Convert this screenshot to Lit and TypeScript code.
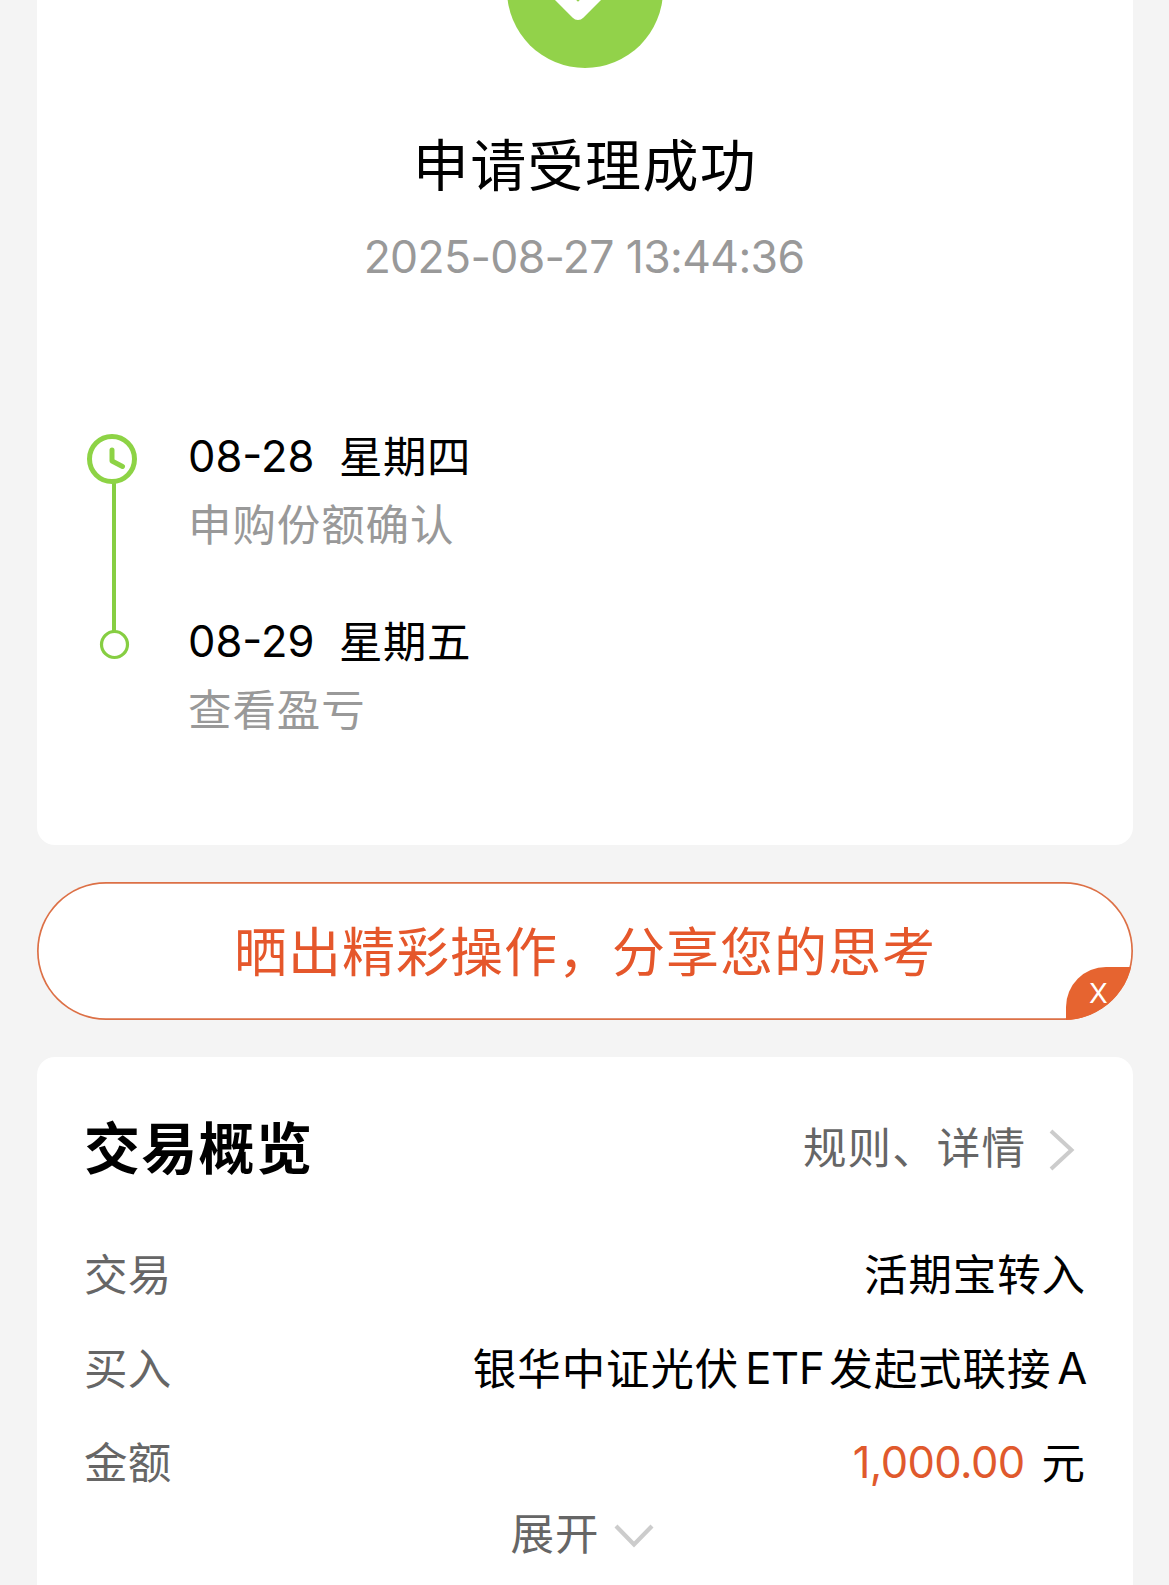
import { LitElement, html, css } from "lit";
import { customElement } from "lit/decorators.js";

@customElement("app-root")
export class AppRoot extends LitElement {
  static styles = css`
    :host {
      display: block;
      height: 1585px;
      overflow: hidden;
      background: #f4f4f4;
      color: #000;
      font-family: Inter, "Noto Sans CJK SC", sans-serif;
      font-size: 43.5px;
      line-height: 60px;
      letter-spacing: 0.9px;
    }
    * { box-sizing: border-box; }
    .page { display: flex; flex-direction: column; gap: 37px; padding: 0 36px 0 37px; }
    .card { background: #fff; border-radius: 18px; }
    .status {
      height: 845px;
      border-radius: 0 0 18px 18px;
      display: flex;
      flex-direction: column;
    }
    .badge { display: block; align-self: center; width: 156px; height: 68px; }
    .title {
      margin: 58px 0 0;
      text-align: center;
      font-size: 56px;
      font-weight: 400;
      line-height: 80px;
      letter-spacing: 1.4px;
    }
    .time { margin: 21px 2px 0 0; text-align: center; color: #999; font-size: 44.5px; letter-spacing: -0.65px; }
    .timeline { display: flex; margin-top: 138px; padding-left: 48px; }
    .rail { flex: none; display: block; width: 56px; height: 240px; }
    .steps { display: flex; flex-direction: column; gap: 57px; margin: 1px 0 0 47px; }
    .when { display: flex; height: 60px; }
    .day { width: 151px; letter-spacing: 0; }
    .week { padding-top: 1px; letter-spacing: 0.5px; }
    .note { margin-top: 9px; height: 59px; color: #999; }
    .share {
      position: relative;
      height: 138px;
      display: flex;
      align-items: center;
      justify-content: center;
      overflow: hidden;
      box-shadow: inset 0 0 0 1.7px #dc7046;
      border-radius: 69px;
      background: #fff;
      color: #e5572b;
      font-size: 53px;
      letter-spacing: 1px;
    }
    .slogan { padding-top: 3px; }
    .close {
      position: absolute;
      right: 0;
      bottom: 0;
      width: 67px;
      height: 53px;
      padding-right: 2px;
      border-radius: 40px 0 0 0;
      background: #e66430;
      color: #fff;
      font-size: 27.5px;
      line-height: 53px;
      letter-spacing: 0;
      text-align: center;
    }
    .overview { height: 600px; padding: 50px 48px 0; display: flex; flex-direction: column; }
    .head { display: flex; justify-content: space-between; align-items: center; height: 80px; }
    .head h2 { margin: 4px 0 0 -1px; font-size: 56px; font-weight: 700; letter-spacing: 1.3px; }
    .rules { display: flex; align-items: center; color: #666; letter-spacing: 1.1px; }
    .rules span { padding-top: 2px; }
    .chev { display: block; margin: 5px 10px 0 23px; width: 26px; height: 44px; }
    .rows { display: flex; flex-direction: column; gap: 34px; margin-top: 57.5px; }
    .row { display: flex; justify-content: space-between; height: 60px; }
    .label { color: #666; margin-left: -1px; letter-spacing: 0.3px; }
    .value { display: flex; margin-right: -1px; }
    .latin { margin: -1px 5px 0 6px; letter-spacing: -0.3px; }
    .last { margin-right: -1px; }
    .amount { margin: -1px 17px 0 0; color: #e0592c; letter-spacing: -0.6px; }
    .more { display: flex; justify-content: center; align-items: center; margin: 11.5px 1px 0 0; color: #666; }
    .down { display: block; margin: 4px 4px 0 15px; width: 40px; height: 26px; }
  `;

  private steps = [
    { day: "08-28", week: "星期四", note: "申购份额确认" },
    { day: "08-29", week: "星期五", note: "查看盈亏" },
  ];

  render() {
    return html`
      <main class="page">
        <section class="card status">
          <svg class="badge" viewBox="0 0 156 68">
            <circle cx="78" cy="-10" r="78" fill="#92d24a" />
            <path d="M41 -17.6L71 12.4L105 -21.6" fill="none" stroke="#fff" stroke-width="15" stroke-linejoin="round" />
          </svg>
          <h1 class="title">申请受理成功</h1>
          <div class="time">2025-08-27 13:44:36</div>
          <div class="timeline">
            <svg class="rail" viewBox="0 0 56 240" fill="none">
              <path d="M29 57V206" stroke="#86ce42" stroke-width="4" />
              <circle cx="27" cy="34" r="22.5" stroke="#8dd345" stroke-width="5" />
              <path d="M27 25V36L37.5 41.5" stroke="#8dd345" stroke-width="5" stroke-linecap="round" stroke-linejoin="round" />
              <circle cx="29.5" cy="219.5" r="13" stroke="#86ce42" stroke-width="3.2" />
            </svg>
            <div class="steps">
              ${this.steps.map(
                (s) => html`<div>
                  <div class="when"><span class="day">${s.day}</span><span class="week">${s.week}</span></div>
                  <div class="note">${s.note}</div>
                </div>`
              )}
            </div>
          </div>
        </section>

        <section class="share">
          <span class="slogan">晒出精彩操作，分享您的思考</span>
          <span class="close">X</span>
        </section>

        <section class="card overview">
          <div class="head">
            <h2>交易概览</h2>
            <div class="rules">
              <span>规则、详情</span>
              <svg class="chev" viewBox="0 0 26 44" fill="none">
                <path d="M2 3L22.5 22L2 41" stroke="#ccc" stroke-width="4" />
              </svg>
            </div>
          </div>
          <div class="rows">
            <div class="row"><span class="label">交易</span><span class="value">活期宝转入</span></div>
            <div class="row">
              <span class="label">买入</span>
              <span class="value"><span>银华中证光伏</span><span class="latin">ETF</span><span>发起式联接</span><span class="latin last">A</span></span>
            </div>
            <div class="row">
              <span class="label">金额</span>
              <span class="value"><span class="amount">1,000.00</span><span>元</span></span>
            </div>
          </div>
          <div class="more">
            <span>展开</span>
            <svg class="down" viewBox="0 0 40 26" fill="none">
              <path d="M2 3L20 21.5L38 3" stroke="#ccc" stroke-width="4.2" />
            </svg>
          </div>
        </section>
      </main>
    `;
  }
}
